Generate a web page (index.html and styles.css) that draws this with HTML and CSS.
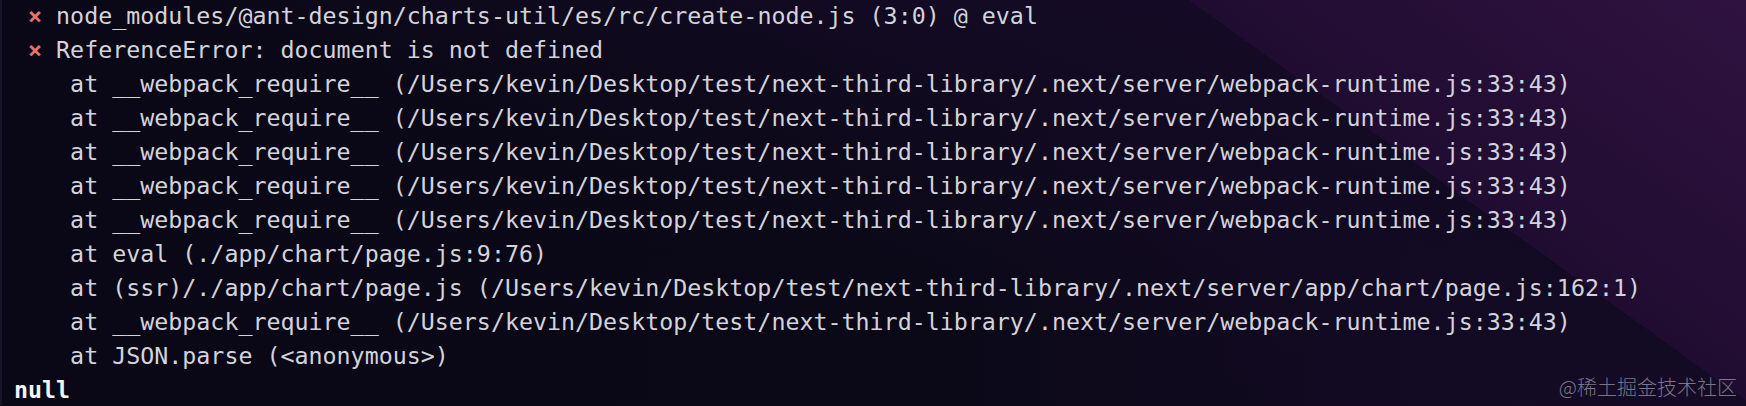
FILE: index.html
```html
<!DOCTYPE html>
<html lang="en">
<head>
<meta charset="utf-8">
<title>Terminal output</title>
<link rel="stylesheet" href="styles.css">
</head>
<body>
<main class="terminal">
  <div class="line"> <span class="x">×</span> node_modules/@ant-design/charts-util/es/rc/create-node.js (3:0) @ eval</div>
  <div class="line"> <span class="x">×</span> ReferenceError: document is not defined</div>
  <div class="line">    at __webpack_require__ (/Users/kevin/Desktop/test/next-third-library/.next/server/webpack-runtime.js:33:43)</div>
  <div class="line">    at __webpack_require__ (/Users/kevin/Desktop/test/next-third-library/.next/server/webpack-runtime.js:33:43)</div>
  <div class="line">    at __webpack_require__ (/Users/kevin/Desktop/test/next-third-library/.next/server/webpack-runtime.js:33:43)</div>
  <div class="line">    at __webpack_require__ (/Users/kevin/Desktop/test/next-third-library/.next/server/webpack-runtime.js:33:43)</div>
  <div class="line">    at __webpack_require__ (/Users/kevin/Desktop/test/next-third-library/.next/server/webpack-runtime.js:33:43)</div>
  <div class="line">    at eval (./app/chart/page.js:9:76)</div>
  <div class="line">    at (ssr)/./app/chart/page.js (/Users/kevin/Desktop/test/next-third-library/.next/server/app/chart/page.js:162:1)</div>
  <div class="line">    at __webpack_require__ (/Users/kevin/Desktop/test/next-third-library/.next/server/webpack-runtime.js:33:43)</div>
  <div class="line">    at JSON.parse (&lt;anonymous&gt;)</div>
  <div class="line null">null</div>
  <div class="watermark">@稀土掘金技术社区</div>
</main>
</body>
</html>
```

FILE: styles.css
```css
html, body {
  margin: 0;
  padding: 0;
  width: 1746px;
  height: 406px;
  overflow: hidden;
}

body {
  background:
    linear-gradient(35.7deg, rgba(0,0,0,0) 75.9%, #200c31 75.9%, #2f1240 100%),
    linear-gradient(200deg, #1d0c2e 0%, #120a22 30%, rgba(10,8,22,0) 55%),
    linear-gradient(90deg, #0a0816 0%, #0b0918 55%, #120a22 80%, #1a0c2c 100%);
}

.terminal {
  position: relative;
  height: 406px;
  box-sizing: border-box;
  padding: 0 0 0 12px;
  border-left: 2px solid #15142a;
  font-family: "DejaVu Sans Mono", "Liberation Mono", monospace;
  font-size: 23.3px;
  line-height: 34px;
  color: #d4d3dc;
}

.line {
  white-space: pre;
  height: 34px;
}

.line:first-child {
  margin-top: -1px;
}

.x {
  color: #e8736d;
  font-weight: bold;
}

.null {
  color: #f4f4f6;
  font-weight: bold;
}

.watermark {
  position: absolute;
  right: 9px;
  bottom: 6px;
  font-family: "Noto Sans CJK SC", sans-serif;
  font-weight: 300;
  font-size: 20px;
  line-height: 24px;
  color: #7a7586;
}
```
